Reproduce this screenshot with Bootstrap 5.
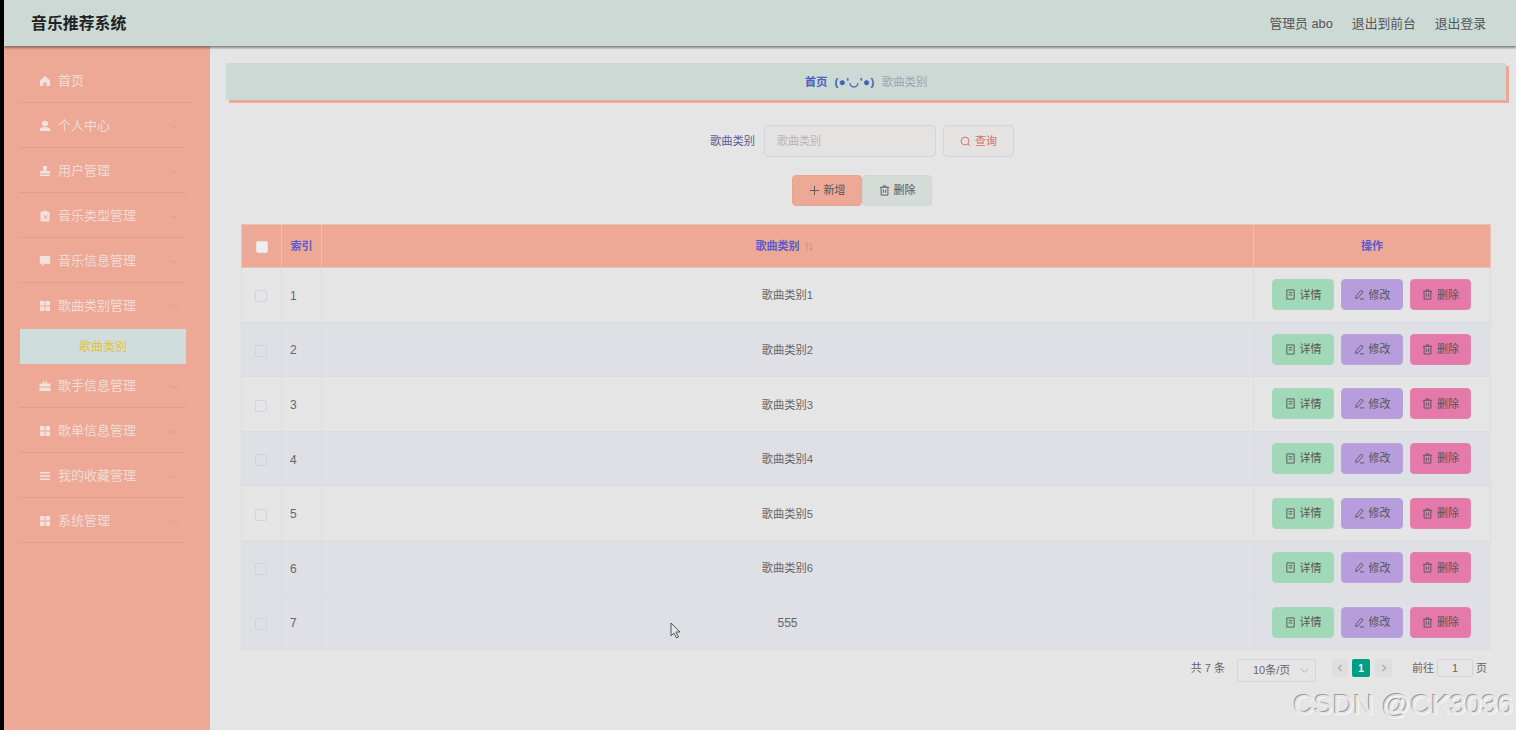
<!doctype html>
<html lang="zh-CN">
<head>
<meta charset="utf-8">
<title>音乐推荐系统</title>
<link rel="stylesheet" href="https://cdn.jsdelivr.net/npm/bootstrap@5.3.0/dist/css/bootstrap.min.css">
<style>
html,body{height:730px;overflow:hidden;background:#000}
body{font-family:"Liberation Sans","Noto Sans CJK SC",sans-serif;font-size:12px;color:#666}
.shell{margin-left:4px;height:730px;background:#e5e5e5;position:relative;overflow:hidden}
.topbar{height:46px;background:#cdd9d5;box-shadow:0 2px 2px rgba(60,60,60,.55);padding:1px 30px 0 27px;position:relative;z-index:2}
.brandname{font-size:15.9px;font-weight:700;color:#222;padding-top:1px}
.toplinks{font-size:12.8px;color:#555;gap:19px}
.body-row{height:684px}
.sidemenu{width:206px;flex:none;background:#eda995;padding:12px 16px 0;color:#efdcd8;font-size:13px}
.sideitem{height:45px;padding:2px 8px 0 19px;border-bottom:1px solid #e09e8c;margin-right:8px}
.sideitem:first-child{margin-right:0}
.sideitem.opened{padding-top:0}
.sideitem svg.ico{width:12px;height:12px;margin-right:7px;fill:#f2e2dd;flex:none}
.sideitem .chev{width:9px;height:9px;margin-left:auto;fill:none;stroke:#e09e8c;stroke-width:1.2}
.subitem{height:35px;background:#cfdedd;color:#e3c23b;margin:1px 8px -1px 0;font-size:12px;padding-top:1px}
.mainpane{flex:1;min-width:0;padding-top:17px}
.crumbbar{height:37px;margin:0 10px 0 16px;background:#cdd9d5;box-shadow:3px 3px 0 #eda995;font-size:11.4px;gap:7px;padding-top:2px}
.crumbbar b{color:#4a63c0;font-weight:700}
.crumbbar .face{color:#3f66b4;font-weight:700;letter-spacing:.5px}
.crumbbar span.last{color:#9aa6b2}
.searchrow{margin-top:25px;gap:8px;padding-right:2px}
.searchrow label{color:#5a5a9a;font-size:11.25px;margin-right:1px}
.field-input.form-control{width:172px;height:32px;background:#e5e3e1;border:1px solid #d3d4da;border-radius:4px;font-size:11px;padding:0 12px;color:#999}
.field-input.form-control::placeholder{color:#b3b3b8}
.querybtn.btn{width:71px;height:32px;background:#e5e3e1;border:1px solid #d3d4da;border-radius:4px;color:#cf6f60;font-size:11px;padding:0;gap:4px;margin-left:-1px}
.actionrow{margin-top:18px;height:31px;padding-right:2px}
.addbtn.btn,.removebtn.btn{width:70px;height:31px;font-size:11px;padding:0;border-radius:4px;gap:4px;color:#555}
.addbtn.btn{background:#eda995;border:1px solid #e6a591}
.removebtn.btn{background:#d5dbd7;border:1px solid #d0d6d3}
.tablewrap{margin:18px 26px 0 31px}
.musictable.table{--bs-table-bg:transparent;table-layout:fixed;margin:0;width:1249px;border-color:#dcdde3;font-size:11.25px;color:#666}
.musictable th{height:43px;background:#eda995;color:#5b5bd0;font-size:11px;font-weight:700;text-align:center;vertical-align:middle;padding:0;border:1px solid #e8c3b6}
.musictable td{height:54.6px;padding:2px 0 0;vertical-align:middle;border:1px solid #dcdde3;text-align:center}
.musictable td.btncell{padding:0}
.musictable tr:nth-child(even) td,.musictable tr.hovered td{background:#dfe0e6}
.musictable td.idx{text-align:left;padding-left:8px;font-size:12px}
.musictable td.plainval{font-size:12px}
.fakecheck{display:inline-block;width:12px;height:12px;border:1px solid #d3d4da;border-radius:2px;vertical-align:middle}
td .fakecheck{margin-right:1px}
th .fakecheck{background:#eee;border-color:#e3e3e3}
.sorter{color:#d3958a;font-size:9px;margin:0 6px 0 5px}
.rowbtns{gap:7px;margin-left:-1px}
.rowbtns .btn{width:62px;height:31px;padding:0;font-size:11px;border-radius:4px;color:#555;gap:4px;border:1px solid transparent}
.rowbtns .b-detail{background:#a0d8b8;border-color:#a6d8bc}
.rowbtns .b-edit{background:#b79ddb;border-color:#bba4dc}
.rowbtns .b-del{width:61px;background:#e57aaa;border-color:#e283ae}
svg.lineico{width:11px;height:11px;fill:none;stroke:currentColor;stroke-width:1;flex:none}
.pagerrow{margin:9px 29px 0 0;font-size:11px;color:#666;height:22px}
.sizepick{width:79px;height:23px;border:1px solid #d3d4da;border-radius:3px;margin:0 16px 0 12px;padding:0 6px 0 15px}
.sizepick svg{width:9px;height:9px;margin-left:auto;fill:none;stroke:#aaa;stroke-width:1}
.pgbtn{width:17px;height:18px;background:#dedede;color:#aaa;border-radius:2px;font-size:10px;align-self:flex-start}
.pgbtn.prevpage{width:16px;margin-right:4px}
.pgbtn.active-page{width:18px;background:#009e82;color:#fff;font-weight:700;margin-right:5px}
.pgbtn svg{width:8px;height:8px;fill:none;stroke:#aaa;stroke-width:1.2}
.jumpbox{width:36px;height:18px;border:1px solid #d3d4da;border-radius:3px;margin:0 3px;align-self:flex-start}
.jumptext{margin-left:20px}
.pgtext{line-height:18px;align-self:flex-start}
.watermark{position:absolute;right:3px;top:686px;font-family:"Liberation Sans",sans-serif;font-size:28.4px;line-height:36px;color:#e6e6e6;text-shadow:1px 1px 0 #f8f8f8,-1px -1px 0 #999;white-space:nowrap;z-index:5}
.pointer{position:absolute;left:666px;top:622px;width:12px;height:17px;z-index:5}
</style>
</head>
<body>
<svg width="0" height="0" class="d-block" aria-hidden="true">
  <defs>
    <symbol id="i-home" viewBox="0 0 12 12"><path d="M6 1 1 5.500V11h3.500V7.500h3V11H11V5.500z"/></symbol>
    <symbol id="i-user" viewBox="0 0 12 12"><ellipse cx="6" cy="3.500" rx="3" ry="2.800"/><path d="M.8 11V9.300C.8 7.800 3 7 6 7s5.200.8 5.200 2.300V11z"/></symbol>
    <symbol id="i-stamp" viewBox="0 0 12 12"><path d="M3.800 1h4.400L7.400 6h3.600v2.500H1V6h3.600zM1 9.500h10V11H1z"/></symbol>
    <symbol id="i-clip" viewBox="0 0 12 12"><path d="M4 .8h4v1h2.500v9.700h-9V1.800H4zM4.500 5.500 6 7 4.500 8.500l.7.500L6.500 7.800 7.800 9l.7-.5L7 7l1.500-1.500-.7-.5-1.300 1.300L5.200 5z"/></symbol>
    <symbol id="i-chat" viewBox="0 0 12 12"><path d="M.8 1h10.400v7.800H5.200L2.800 11.200V8.800H.8z"/></symbol>
    <symbol id="i-grid" viewBox="0 0 12 12"><path d="M1 1h4.500v4.500H1zM6.500 1H11v4.500H6.500zM1 6.500h4.500V11H1zM6.500 6.500H11V11H6.500z"/></symbol>
    <symbol id="i-case" viewBox="0 0 12 12"><path d="M4 1.500h4v2h3.500v3H.5v-3H4zM5 2.500v1h2v-1zM.5 7.500h11V11H.5z"/></symbol>
    <symbol id="i-list" viewBox="0 0 12 12"><path d="M1 2h10v1.500H1zM1 5.200h10v1.500H1zM1 8.500h10V10H1z"/></symbol>
    <symbol id="i-chev" viewBox="0 0 10 10"><path d="M1 3l4 4 4-4"/></symbol>
    <symbol id="i-search" viewBox="0 0 12 12"><circle cx="5.500" cy="5.500" r="4.300"/><path d="M8.700 8.700 11 11"/></symbol>
    <symbol id="i-plus" viewBox="0 0 12 12"><path d="M6 1v10M1 6h10"/></symbol>
    <symbol id="i-trash" viewBox="0 0 12 12"><path d="M1 2.500h10M4.500 2.500V1h3v1.500M2.300 2.500V11h7.400V2.500M4.800 5v3.500M7.200 5v3.500"/></symbol>
    <symbol id="i-doc" viewBox="0 0 12 12"><path d="M2 1h8v10H2zM4 4h4M4 6.500h4"/></symbol>
    <symbol id="i-edit" viewBox="0 0 12 12"><path d="M7.800 1.200 10 3 4.500 9.500 1.800 10.300 2.300 7.500zM6.500 10.800H11"/></symbol>
    <symbol id="i-left" viewBox="0 0 8 8"><path d="M5.500 1 2.500 4l3 3"/></symbol>
    <symbol id="i-right" viewBox="0 0 8 8"><path d="M2.500 1l3 3-3 3"/></symbol>
  </defs>
</svg>
<div class="shell">
  <header class="topbar d-flex align-items-center justify-content-between">
    <div class="brandname">音乐推荐系统</div>
    <div class="toplinks d-flex"><span>管理员 abo</span><span>退出到前台</span><span>退出登录</span></div>
  </header>
  <div class="body-row d-flex">
    <nav class="sidemenu">
      <div class="sideitem d-flex align-items-center"><svg class="ico"><use href="#i-home"/></svg>首页</div>
      <div class="sideitem d-flex align-items-center"><svg class="ico"><use href="#i-user"/></svg>个人中心<svg class="chev"><use href="#i-chev"/></svg></div>
      <div class="sideitem d-flex align-items-center"><svg class="ico"><use href="#i-stamp"/></svg>用户管理<svg class="chev"><use href="#i-chev"/></svg></div>
      <div class="sideitem d-flex align-items-center"><svg class="ico"><use href="#i-clip"/></svg>音乐类型管理<svg class="chev"><use href="#i-chev"/></svg></div>
      <div class="sideitem d-flex align-items-center"><svg class="ico"><use href="#i-chat"/></svg>音乐信息管理<svg class="chev"><use href="#i-chev"/></svg></div>
      <div class="sideitem opened d-flex align-items-center border-0"><svg class="ico"><use href="#i-grid"/></svg>歌曲类别管理<svg class="chev"><use href="#i-chev"/></svg></div>
      <div class="subitem d-flex align-items-center justify-content-center">歌曲类别</div>
      <div class="sideitem d-flex align-items-center"><svg class="ico"><use href="#i-case"/></svg>歌手信息管理<svg class="chev"><use href="#i-chev"/></svg></div>
      <div class="sideitem d-flex align-items-center"><svg class="ico"><use href="#i-grid"/></svg>歌单信息管理<svg class="chev"><use href="#i-chev"/></svg></div>
      <div class="sideitem d-flex align-items-center"><svg class="ico"><use href="#i-list"/></svg>我的收藏管理<svg class="chev"><use href="#i-chev"/></svg></div>
      <div class="sideitem d-flex align-items-center"><svg class="ico"><use href="#i-grid"/></svg>系统管理<svg class="chev"><use href="#i-chev"/></svg></div>
    </nav>
    <main class="mainpane">
      <div class="crumbbar d-flex align-items-center justify-content-center"><b>首页</b><span class="face">(●'◡'●)</span><span class="last">歌曲类别</span></div>
      <div class="searchrow d-flex align-items-center justify-content-center">
        <label>歌曲类别</label>
        <input class="form-control field-input" placeholder="歌曲类别">
        <button class="btn querybtn d-inline-flex align-items-center justify-content-center"><svg class="lineico"><use href="#i-search"/></svg>查询</button>
      </div>
      <div class="actionrow d-flex justify-content-center">
        <button class="btn addbtn d-inline-flex align-items-center justify-content-center"><svg class="lineico"><use href="#i-plus"/></svg>新增</button>
        <button class="btn removebtn d-inline-flex align-items-center justify-content-center"><svg class="lineico"><use href="#i-trash"/></svg>删除</button>
      </div>
      <div class="tablewrap">
        <table class="table musictable">
          <colgroup><col style="width:40px"><col style="width:40px"><col style="width:932px"><col style="width:237px"></colgroup>
          <thead><tr><th><span class="fakecheck"></span></th><th>索引</th><th>歌曲类别<span class="sorter">⇅</span></th><th>操作</th></tr></thead>
          <tbody id="rows"></tbody>
        </table>
      </div>
      <div class="pagerrow d-flex align-items-start justify-content-end">
        <span class="pgtext">共 7 条</span>
        <div class="sizepick d-flex align-items-center">10条/页<svg><use href="#i-chev"/></svg></div>
        <div class="pgbtn prevpage d-flex align-items-center justify-content-center"><svg><use href="#i-left"/></svg></div>
        <div class="pgbtn active-page d-flex align-items-center justify-content-center">1</div>
        <div class="pgbtn d-flex align-items-center justify-content-center"><svg><use href="#i-right"/></svg></div>
        <span class="pgtext jumptext">前往</span>
        <div class="jumpbox d-flex align-items-center justify-content-center">1</div>
        <span class="pgtext">页</span>
      </div>
    </main>
  </div>
  <svg class="pointer" viewBox="0 0 12 17"><path d="M1 1v13l3-3 2.500 5 2-1-2.500-5h4z" fill="#e5e5e8" stroke="#555" stroke-width="1"/></svg>
  <div class="watermark">CSDN @CK3036</div>
</div>
<script>
var names=["歌曲类别1","歌曲类别2","歌曲类别3","歌曲类别4","歌曲类别5","歌曲类别6","555"];
document.getElementById("rows").innerHTML=names.map(function(n,i){
  return '<tr'+(i===6?' class="hovered"':'')+'><td><span class="fakecheck"></span></td><td class="idx">'+(i+1)+'</td><td'+(i===6?' class="plainval"':'')+'>'+n+'</td><td class="btncell"><div class="rowbtns d-flex justify-content-center">'+
  '<button class="btn b-detail d-inline-flex align-items-center justify-content-center"><svg class="lineico"><use href="#i-doc"/></svg>详情</button>'+
  '<button class="btn b-edit d-inline-flex align-items-center justify-content-center"><svg class="lineico"><use href="#i-edit"/></svg>修改</button>'+
  '<button class="btn b-del d-inline-flex align-items-center justify-content-center"><svg class="lineico"><use href="#i-trash"/></svg>删除</button>'+
  '</div></td></tr>';
}).join("");
</script>
<script src="https://cdn.jsdelivr.net/npm/bootstrap@5.3.0/dist/js/bootstrap.bundle.min.js"></script>
</body>
</html>
